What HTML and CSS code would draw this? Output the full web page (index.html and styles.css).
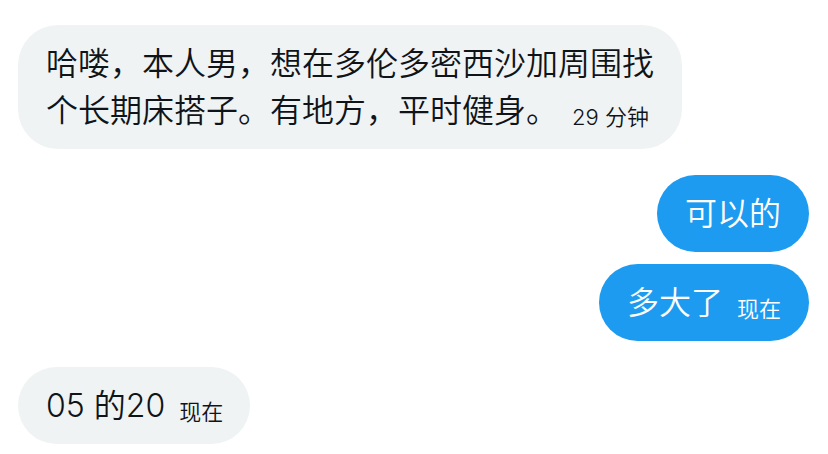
FILE: index.html
```html
<!DOCTYPE html>
<html lang="zh-CN">
<head>
    <meta charset="UTF-8">
    <meta name="viewport" content="width=device-width, initial-scale=1.0">
    <title>私信</title>
    <link rel="stylesheet" href="styles.css">
</head>
<body>
    <div class="thread">
        <div class="group received">
            <div class="bubble">哈喽，本人男，想在多伦多密西沙加周围找个长期床搭子。有地方，平时健身。<span class="time">29 分钟</span></div>
        </div>

        <div class="group sent">
            <div class="bubble">可以的</div>
            <div class="bubble">多大了<span class="time">现在</span></div>
        </div>

        <div class="group received">
            <div class="bubble">05 的20<span class="time">现在</span></div>
        </div>
    </div>
</body>
</html>
```

FILE: styles.css
```css
body {
    margin: 0;
    background-color: #ffffff;
    font-family: Inter, "Noto Sans CJK SC", sans-serif;
    font-weight: 350;
    color: #0f1419;
}

.thread {
    display: flex;
    flex-direction: column;
    gap: 26px;
    padding: 25px 19px 0 18px;
}

.group {
    display: flex;
    flex-direction: column;
    gap: 12px;
}

.group.received {
    align-items: flex-start;
}

.group.sent {
    align-items: flex-end;
}

.bubble {
    box-sizing: border-box;
    max-width: 664px;
    padding: 15px 27px 15px 28px;
    border-radius: 40px;
    font-size: 32px;
    line-height: 47px;
}

.received .bubble {
    background-color: #eff3f4;
    color: #0f1419;
}

.sent .bubble {
    background-color: #1d9bf0;
    color: #ffffff;
    padding: 15px 28px;
}

/* 时间戳跟在正文后面 */
.time {
    display: inline-block;
    margin-left: 14px;
    font-size: 22px;
    line-height: 22px;
    vertical-align: -3px;
}
```
